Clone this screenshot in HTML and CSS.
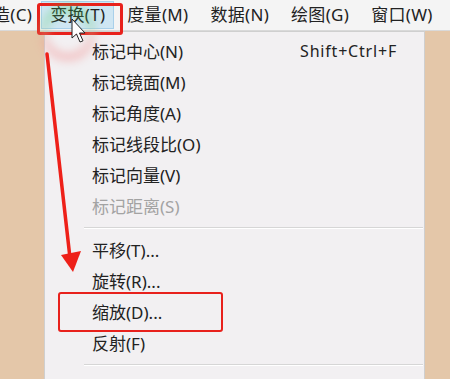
FILE: index.html
```html
<!DOCTYPE html>
<html lang="zh">
<head>
<meta charset="utf-8">
<link rel="stylesheet" href="styles.css">
</head>
<body>
<div class="screen">
  <div class="menubar">
    <span class="mb-item first">造(C)</span>
    <span class="mb-item active">变换(T)</span>
    <span class="mb-item">度量(M)</span>
    <span class="mb-item">数据(N)</span>
    <span class="mb-item">绘图(G)</span>
    <span class="mb-item">窗口(W)</span>
  </div>
  <div class="menu">
    <div class="mi"><span>标记中心(N)</span><span class="sc">Shift+Ctrl+F</span></div>
    <div class="mi"><span>标记镜面(M)</span></div>
    <div class="mi"><span>标记角度(A)</span></div>
    <div class="mi"><span>标记线段比(O)</span></div>
    <div class="mi"><span>标记向量(V)</span></div>
    <div class="mi disabled"><span>标记距离(S)</span></div>
    <div class="sep"></div>
    <div class="mi"><span>平移(T)...</span></div>
    <div class="mi"><span>旋转(R)...</span></div>
    <div class="mi"><span>缩放(D)...</span></div>
    <div class="mi"><span>反射(F)</span></div>
    <div class="sep"></div>
    <div class="mi"><span>造线(L)</span></div>
  </div>
  <div class="redbox top-box"></div>
  <div class="redbox scale-box"></div>
  <svg class="overlay" width="450" height="379" viewBox="0 0 450 379">
    <defs>
      <linearGradient id="glow" x1="0" y1="0" x2="0" y2="1">
        <stop offset="0" stop-color="#3fcf5a"/>
        <stop offset="0.45" stop-color="#9fd9a0"/>
        <stop offset="0.6" stop-color="#f3a0a0"/>
        <stop offset="1" stop-color="#f27a7a"/>
      </linearGradient>
      <filter id="blur" x="-50%" y="-50%" width="200%" height="200%">
        <feGaussianBlur stdDeviation="4"/>
      </filter>
    </defs>
    <circle cx="68" cy="33" r="24" fill="none" stroke="url(#glow)" stroke-width="9" opacity="0.35" filter="url(#blur)"/>
    <line x1="47" y1="54" x2="70" y2="258" stroke="#ee2019" stroke-width="3.5" stroke-linecap="round"/>
    <polygon points="61,255 81,251 73,272" fill="#ee2019"/>
    <path d="M72 19 L72 38 L76.5 34 L80 42 L83 40.8 L79.5 33 L85 33 Z" fill="#ffffff" stroke="#222" stroke-width="1" stroke-linejoin="round"/>
  </svg>
</div>
</body>
</html>
```

FILE: styles.css
```css
html, body {
  margin: 0;
  padding: 0;
}
body {
  width: 450px;
  height: 379px;
  overflow: hidden;
  background: #e4c7a9;
  font-family: "Noto Sans", "Noto Sans CJK SC", sans-serif;
  font-size: 17px;
  color: #222222;
}
.screen {
  position: relative;
  width: 450px;
  height: 379px;
  overflow: hidden;
}
.menubar {
  height: 30px;
  background: #f4f4f4;
  border-bottom: 1px solid #d9d9d9;
  display: flex;
  align-items: center;
  gap: 4px;
  white-space: nowrap;
  letter-spacing: 0.3px;
}
.mb-item {
  padding: 0 9px;
  height: 28px;
  line-height: 28px;
  box-sizing: border-box;
}
.mb-item.first {
  margin-left: -7px;
  padding-left: 0;
  padding-right: 5px;
}
.mb-item.active {
  background: #cfe6f3;
  border: 1px solid #a9d0ea;
  line-height: 26px;
  padding: 0 8px;
}
.menu {
  position: absolute;
  left: 44px;
  top: 31px;
  width: 381px;
  height: 360px;
  box-sizing: border-box;
  background: #f2f0f2;
  border: 1px solid #cfcfcf;
  padding-top: 3px;
}
.mi {
  height: 31px;
  display: flex;
  align-items: center;
  justify-content: space-between;
  padding: 0 27px 0 47px;
  white-space: nowrap;
}
.mi.disabled {
  color: #a3a3a3;
}
.sc {
  font-size: 16px;
  letter-spacing: 0.8px;
}
.sep {
  height: 13px;
  margin-left: 39px;
  margin-right: 1px;
  background: linear-gradient(#d6d6d6, #d6d6d6) 0 6px / 100% 1px no-repeat,
              linear-gradient(#ffffff, #ffffff) 0 7px / 100% 1px no-repeat;
}
.redbox {
  position: absolute;
  border: 3px solid #e8211c;
  border-radius: 3px;
  box-sizing: border-box;
}
.top-box {
  left: 37px;
  top: 3px;
  width: 86px;
  height: 32px;
}
.scale-box {
  left: 58px;
  top: 292px;
  width: 165px;
  height: 40px;
  border-width: 2.5px;
}
.overlay {
  position: absolute;
  left: 0;
  top: 0;
  pointer-events: none;
}
```
